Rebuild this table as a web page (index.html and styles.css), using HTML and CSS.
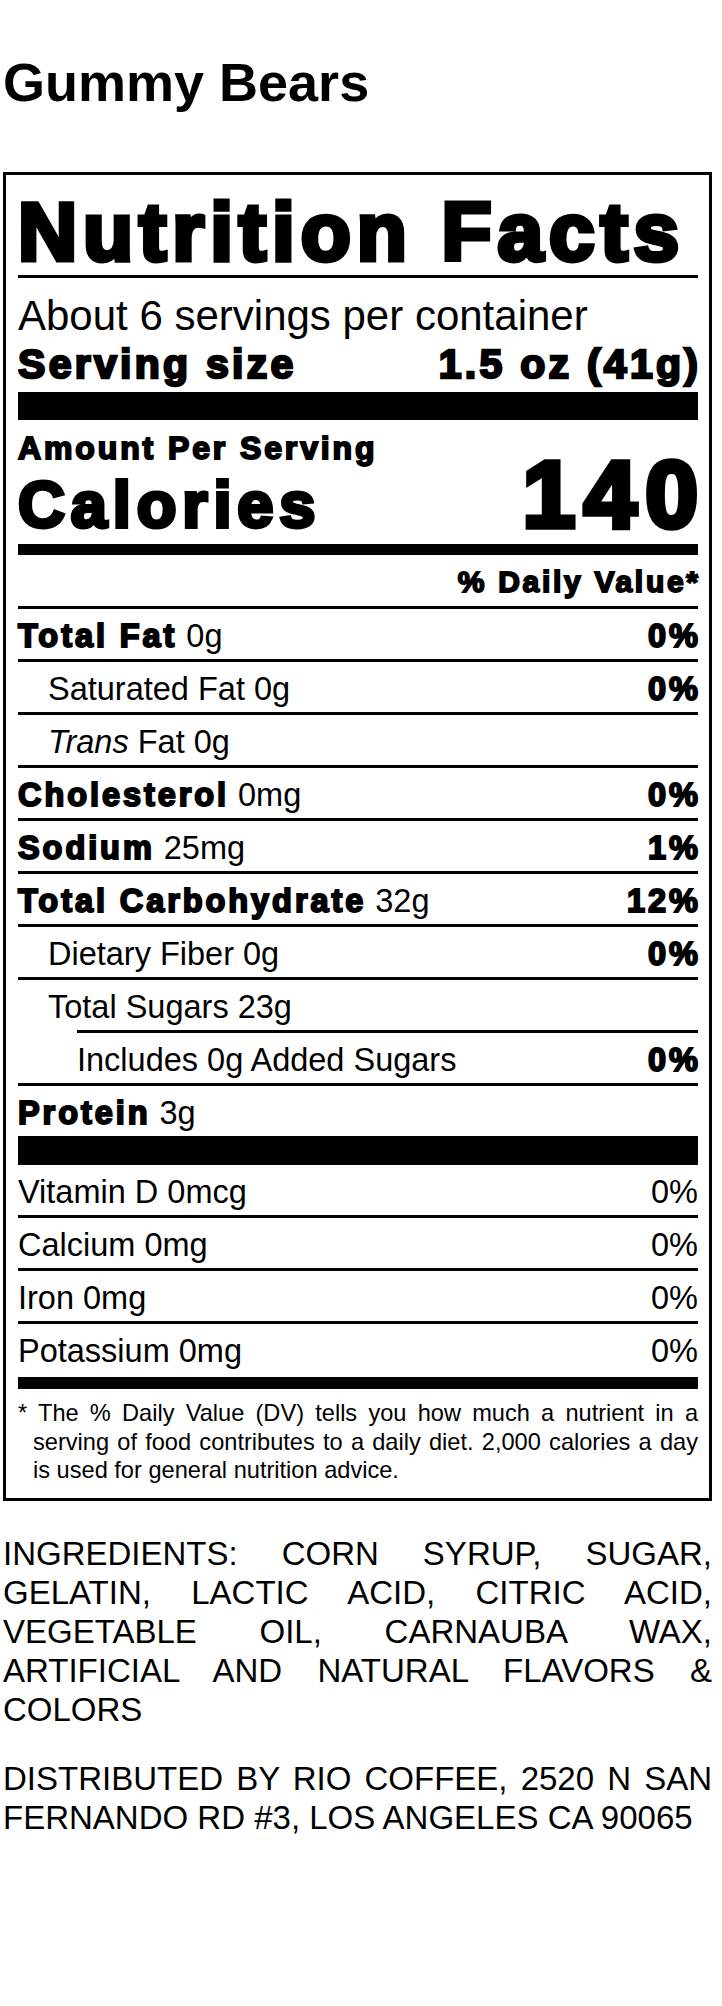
FILE: index.html
```html
<!DOCTYPE html>
<html lang="en">
<head>
<meta charset="utf-8">
<title>Gummy Bears – Nutrition Facts</title>
<link rel="stylesheet" href="styles.css">
</head>
<body>
<div class="page">
  <h1 class="product">Gummy Bears</h1>

  <section class="label">
    <div class="title heavy">Nutrition Facts</div>
    <div class="servings">About 6 servings per container</div>
    <div class="serving-size">
      <span class="heavy">Serving size</span>
      <span class="heavy end">1.5 oz (41g)</span>
    </div>
    <div class="bar-lg"></div>
    <div class="amount heavy">Amount Per Serving</div>
    <div class="calories">
      <span class="heavy cal-label">Calories</span>
      <span class="heavy cal-value end">140</span>
    </div>
    <div class="bar-md"></div>
    <div class="dv-head"><span class="heavy end">% Daily Value*</span></div>

    <div class="row"><span><b class="heavy">Total Fat</b> 0g</span><b class="heavy end">0%</b></div>
    <div class="row indent"><span>Saturated Fat 0g</span><b class="heavy end">0%</b></div>
    <div class="row indent"><span><i>Trans</i> Fat 0g</span></div>
    <div class="row"><span><b class="heavy">Cholesterol</b> 0mg</span><b class="heavy end">0%</b></div>
    <div class="row"><span><b class="heavy">Sodium</b> 25mg</span><b class="heavy end">1%</b></div>
    <div class="row"><span><b class="heavy">Total Carbohydrate</b> 32g</span><b class="heavy end">12%</b></div>
    <div class="row indent"><span>Dietary Fiber 0g</span><b class="heavy end">0%</b></div>
    <div class="row indent"><span>Total Sugars 23g</span></div>
    <div class="row sub"><span>Includes 0g Added Sugars</span><b class="heavy end">0%</b></div>
    <div class="row"><span><b class="heavy">Protein</b> 3g</span></div>

    <div class="bar-lg bar-protein"></div>

    <div class="vrow"><span>Vitamin D 0mcg</span><span>0%</span></div>
    <div class="vrow"><span>Calcium 0mg</span><span>0%</span></div>
    <div class="vrow"><span>Iron 0mg</span><span>0%</span></div>
    <div class="vrow last"><span>Potassium 0mg</span><span>0%</span></div>

    <div class="bar-md bar-foot"></div>
    <p class="footnote">* The % Daily Value (DV) tells you how much a nutrient in a serving of food contributes to a daily diet. 2,000 calories a day is used for general nutrition advice.</p>
  </section>

  <p class="ingredients">INGREDIENTS: CORN SYRUP, SUGAR, GELATIN, LACTIC ACID, CITRIC ACID, VEGETABLE OIL, CARNAUBA WAX, ARTIFICIAL AND NATURAL FLAVORS &amp; COLORS</p>
  <p class="distributor">DISTRIBUTED BY RIO COFFEE, 2520 N SAN FERNANDO RD #3, LOS ANGELES CA 90065</p>
</div>
</body>
</html>
```

FILE: styles.css
```css
html, body {
  margin: 0;
  padding: 0;
  background: #fff;
  color: #000;
}

body {
  font-family: "Liberation Sans", Arial, Helvetica, sans-serif;
}

.page {
  width: 709px;
  margin-left: 3px;
}

.product {
  margin: 51px 0 0;
  font-size: 54px;
  line-height: 62px;
  font-weight: 700;
}

/* Simulated "black" weight: bold + stroke + tracking */
.heavy {
  font-weight: 700;
  -webkit-text-stroke: 0.06em #000;
  letter-spacing: 0.09em;
}

.end {
  margin-right: -0.09em;
}

.label {
  box-sizing: border-box;
  width: 709px;
  margin-top: 59px;
  border: 3px solid #000;
  padding: 0 11px 13px 12px;
}

.title {
  margin-top: 16px;
  padding-bottom: 2px;
  border-bottom: 3px solid #000;
  font-size: 82px;
  line-height: 82px;
  letter-spacing: 0.072em;
  white-space: nowrap;
}

.servings {
  margin-top: 14px;
  font-size: 42px;
  line-height: 48px;
}

.serving-size {
  display: flex;
  justify-content: space-between;
  font-size: 41px;
  line-height: 48px;
}

.serving-size .heavy {
  letter-spacing: 0.08em;
}

.serving-size .end {
  margin-right: -0.08em;
}

.bar-lg {
  height: 28px;
  margin-top: 4px;
  background: #000;
}

.amount {
  margin-top: 12px;
  font-size: 32px;
  line-height: 32px;
}

.calories {
  display: flex;
  justify-content: space-between;
  align-items: baseline;
}

.cal-label {
  font-size: 65px;
  line-height: 60px;
}

.cal-value {
  font-size: 95px;
  line-height: 60px;
}

.bar-md {
  height: 11px;
  margin-top: 9px;
  background: #000;
}

.dv-head {
  display: flex;
  justify-content: flex-end;
  font-size: 30px;
  line-height: 32px;
  padding-top: 11px;
  padding-bottom: 8px;
}

.row,
.vrow {
  display: flex;
  justify-content: space-between;
  height: 48px;
  padding-top: 2px;
  font-size: 32.5px;
  line-height: 50px;
  white-space: nowrap;
}

.row {
  border-top: 3px solid #000;
}

.row b {
  font-weight: 700;
}

.row.indent {
  padding-left: 30px;
}

.row.sub {
  margin-left: 59px;
}

.bar-protein {
  height: 29px;
  margin-top: 0;
}

.vrow {
  border-bottom: 3px solid #000;
}

.vrow.last {
  border-bottom: 0;
}

.bar-foot {
  height: 12px;
  margin-top: 3px;
}

.footnote {
  margin: 0;
  padding: 10px 0 0 15px;
  text-indent: -15px;
  font-size: 23.6px;
  line-height: 28.5px;
  text-align: justify;
}

.ingredients,
.distributor {
  margin: 0;
  font-size: 33px;
  line-height: 39px;
  text-align: justify;
}

.ingredients {
  margin-top: 33px;
}

.distributor {
  margin-top: 30px;
}
```
